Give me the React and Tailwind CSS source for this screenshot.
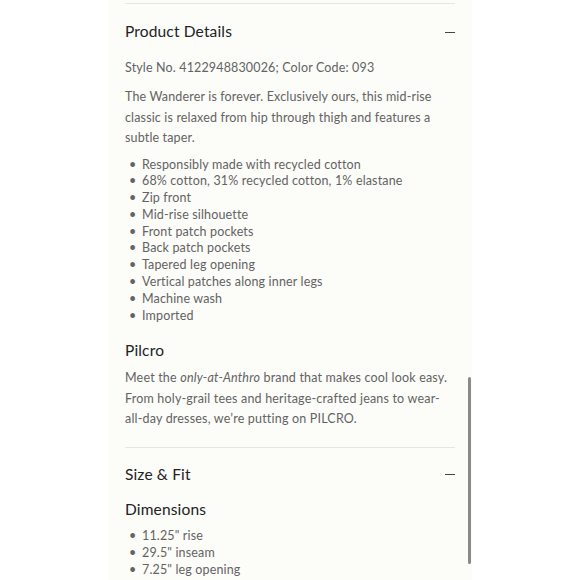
import React from "react";

const Minus = () => (
  <span className="block w-[10px] h-[1px] bg-[#444]" />
);

export default function App() {
  const details = [
    "Responsibly made with recycled cotton",
    "68% cotton, 31% recycled cotton, 1% elastane",
    "Zip front",
    "Mid-rise silhouette",
    "Front patch pockets",
    "Back patch pockets",
    "Tapered leg opening",
    "Vertical patches along inner legs",
    "Machine wash",
    "Imported",
  ];
  const dims = ['11.25" rise', '29.5" inseam', '7.25" leg opening'];
  return (
    <div className="w-[580px] h-[580px] bg-white overflow-hidden" style={{ fontFamily: "Lato, 'Noto Sans', sans-serif" }}>
      <div className="relative mx-auto w-[364px] h-[580px] bg-[#fcfcf9] px-[17px] pt-[3px]">
        <div className="border-t border-[#e6e6e1]" />
        <div className="flex items-center justify-between h-[55px] pt-[1px]">
          <h2 className="text-[15.5px] text-[#222] tracking-[0.01em]">Product Details</h2>
          <Minus />
        </div>
        <div className="text-[12.5px] text-[#636363] tracking-[0.012em]">
          <p className="leading-[20px] -mt-[1px]">Style No. 4122948830026; Color Code: 093</p>
          <p className="leading-[20.5px] mt-[9px] whitespace-nowrap">
            The Wanderer is forever. Exclusively ours, this mid-rise
            <br />
            classic is relaxed from hip through thigh and features a
            <br />
            subtle taper.
          </p>
          <ul className="mt-[8px] leading-[16.8px]">
            {details.map((d) => (
              <li key={d} className="flex">
                <span className="w-[17px] pl-[4px] shrink-0">•</span>
                <span>{d}</span>
              </li>
            ))}
          </ul>
        </div>
        <h3 className="mt-[16px] text-[15.5px] text-[#222] tracking-[0.01em] leading-[20px]">Pilcro</h3>
        <p className="mt-[8px] text-[12.5px] text-[#636363] tracking-[0.015em] leading-[20.5px] whitespace-nowrap">
          Meet the <em>only-at-Anthro</em> brand that makes cool look easy.
          <br />
          From holy-grail tees and heritage-crafted jeans to wear-
          <br />
          all-day dresses, we’re putting on PILCRO.
        </p>
        <div className="mt-[17px] border-t border-[#e6e6e1]" />
        <div className="flex items-center justify-between h-[54px]">
          <h2 className="text-[15.5px] text-[#222] tracking-[0.01em]">Size &amp; Fit</h2>
          <Minus />
        </div>
        <h3 className="mt-[-3px] text-[15.5px] text-[#222] tracking-[0.01em] leading-[20px]">Dimensions</h3>
        <ul className="mt-[9px] text-[12.5px] text-[#636363] tracking-[0.012em] leading-[16.8px]">
          {dims.map((d) => (
            <li key={d} className="flex">
              <span className="w-[17px] pl-[4px] shrink-0">•</span>
              <span>{d}</span>
            </li>
          ))}
        </ul>
        <div className="absolute left-[360px] top-[377px] w-[3px] h-[187px] rounded-full bg-[#8a8a8a]" />
      </div>
    </div>
  );
}
